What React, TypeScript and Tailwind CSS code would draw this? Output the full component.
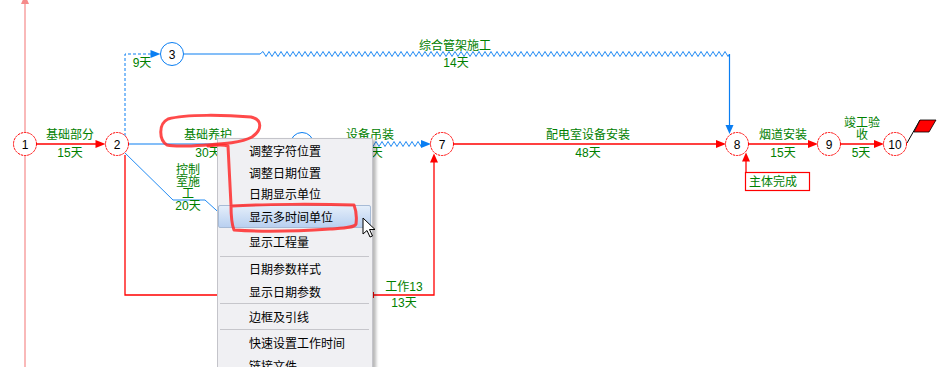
const RED = '#ff0000'
const BLUE = '#0a7ef2'
const GREEN = '#008000'

type Node = { id: string; x: number; y: number; color: string }

const nodes: Node[] = [
  { id: '1', x: 25, y: 144, color: RED },
  { id: '2', x: 117, y: 144, color: RED },
  { id: '3', x: 172, y: 54, color: BLUE },
  { id: '', x: 302, y: 144, color: BLUE },
  { id: '7', x: 442, y: 144, color: RED },
  { id: '8', x: 737, y: 144, color: RED },
  { id: '9', x: 829, y: 144, color: RED },
  { id: '10', x: 895, y: 144, color: RED },
]

const labels: { t: string; x: number; y: number }[] = [
  { t: '基础部分', x: 70, y: 135 },
  { t: '15天', x: 70, y: 153 },
  { t: '9天', x: 142, y: 63 },
  { t: '综合管架施工', x: 455, y: 46 },
  { t: '14天', x: 456, y: 63 },
  { t: '基础养护', x: 208, y: 135 },
  { t: '30天', x: 208, y: 153 },
  { t: '控制', x: 188, y: 170 },
  { t: '室施', x: 188, y: 182 },
  { t: '工', x: 188, y: 194 },
  { t: '20天', x: 188, y: 206 },
  { t: '设备吊装', x: 370, y: 135 },
  { t: '20天', x: 370, y: 153 },
  { t: '配电室设备安装', x: 588, y: 135 },
  { t: '48天', x: 588, y: 153 },
  { t: '烟道安装', x: 783, y: 135 },
  { t: '15天', x: 783, y: 153 },
  { t: '竣工验', x: 862, y: 123 },
  { t: '收', x: 862, y: 135 },
  { t: '5天', x: 861, y: 153 },
  { t: '工作13', x: 404, y: 287 },
  { t: '13天', x: 404, y: 303 },
]

function zigzag(x1: number, x2: number, y: number) {
  let d = `M${x1},${y}`
  let up = true
  for (let x = x1 + 3; x <= x2; x += 3) {
    d += ` L${x},${up ? y - 2.5 : y + 2.5}`
    up = !up
  }
  return d + ` L${x2},${y}`
}

const right = (x: number, y: number) => `${x},${y} ${x - 10},${y - 4} ${x - 10},${y + 4}`
const upArrow = (x: number, y: number) => `${x},${y} ${x - 4},${y + 9} ${x + 4},${y + 9}`
const down = (x: number, y: number) => `${x},${y} ${x - 4},${y - 9} ${x + 4},${y - 9}`

function Diagram() {
  return (
    <svg
      width={950}
      height={367}
      className="absolute inset-0 font-['Liberation_Sans','Noto_Sans_CJK_SC',sans-serif] text-[12px]"
    >
      {/* timeline on the left */}
      <line x1={25} y1={0} x2={25} y2={367} stroke="#f58a8a" strokeWidth={1.2} />
      <polygon points={upArrow(25, -5)} fill="#f58a8a" />

      {/* 1 -> 2 */}
      <line x1={36} y1={144} x2={100} y2={144} stroke={RED} strokeWidth={1.5} />
      <polygon points={right(105.5, 144)} fill={RED} />

      {/* 2 -> 3 dashed */}
      <polyline points="125,136 125,54 152,54" fill="none" stroke={BLUE} strokeDasharray="3 2" />
      <polygon points={right(160.5, 54)} fill={BLUE} />

      {/* 3 -> 8 */}
      <line x1={183.5} y1={54} x2={260} y2={54} stroke={BLUE} strokeWidth={1.2} />
      <path d={zigzag(260, 729.5, 54)} fill="none" stroke={BLUE} strokeWidth={0.9} />
      <line x1={729.5} y1={54} x2={729.5} y2={126} stroke={BLUE} strokeWidth={1.2} />
      <polygon points={down(729.5, 134)} fill={BLUE} />

      {/* 2 -> hidden node */}
      <line x1={128.5} y1={144} x2={291} y2={144} stroke={BLUE} strokeWidth={1.2} />
      <polyline points="124,152 173,200 205,200 226,219" fill="none" stroke={BLUE} strokeWidth={0.9} />

      {/* hidden node -> 7 */}
      <path d={zigzag(313, 421, 144)} fill="none" stroke={BLUE} strokeWidth={0.9} />
      <polygon points={right(431, 144)} fill={BLUE} />

      {/* 2 -> 7 lower path */}
      <polyline points="125,155 125,295 434,295 434,162" fill="none" stroke={RED} strokeWidth={1.3} />
      <line x1={373.5} y1={292} x2={373.5} y2={298} stroke={RED} />
      <polygon points={upArrow(434, 153.5)} fill={RED} />

      {/* 7 -> 8 -> 9 -> 10 */}
      <line x1={453.5} y1={144} x2={720} y2={144} stroke={RED} strokeWidth={1.5} />
      <polygon points={right(726, 144)} fill={RED} />
      <line x1={748.5} y1={144} x2={812} y2={144} stroke={RED} strokeWidth={1.5} />
      <polygon points={right(818, 144)} fill={RED} />
      <line x1={840.5} y1={144} x2={878} y2={144} stroke={RED} strokeWidth={1.5} />
      <polygon points={right(884, 144)} fill={RED} />

      {/* milestone box */}
      <line x1={746} y1={172} x2={746} y2={160} stroke={RED} strokeWidth={1.3} />
      <polygon points={upArrow(746, 152.5)} fill={RED} />
      <rect x={745.5} y={172.5} width={64} height={18} fill="white" stroke={RED} strokeWidth={1.2} />
      <text x={749} y={182} fill={GREEN} dominantBaseline="central">主体完成</text>

      {/* flag */}
      <line x1={907} y1={143} x2={920} y2={120} stroke="black" />
      <polygon points="920,120 936,120 929,132 914,132" fill={RED} stroke="black" strokeWidth={0.8} />

      {nodes.map((n, i) => (
        <g key={i}>
          <circle
            cx={n.x}
            cy={n.y}
            r={11.5}
            fill="white"
            stroke={n.color}
            strokeWidth={1}
            strokeDasharray={n.color === RED ? '2.5 0.8' : undefined}
          />
          <text x={n.x} y={n.y + 0.5} textAnchor="middle" dominantBaseline="central" fill="black">
            {n.id}
          </text>
        </g>
      ))}

      {labels.map((l, i) => (
        <text key={i} x={l.x} y={l.y} textAnchor="middle" dominantBaseline="central" fill={GREEN}>
          {l.t}
        </text>
      ))}
    </svg>
  )
}

type Row = { label?: string; h: number; active?: boolean; sep?: boolean }

const rows: Row[] = [
  { label: '调整字符位置', h: 22 },
  { label: '调整日期位置', h: 21 },
  { label: '日期显示单位', h: 22 },
  { label: '显示多时间单位', h: 23, active: true },
  { label: '显示工程量', h: 28 },
  { sep: true, h: 1 },
  { label: '日期参数样式', h: 23 },
  { label: '显示日期参数', h: 23 },
  { sep: true, h: 1 },
  { label: '边框及引线', h: 25 },
  { sep: true, h: 1 },
  { label: '快速设置工作时间', h: 25 },
  { label: '链接文件', h: 22 },
]

function ContextMenu() {
  return (
    <div className="absolute left-[217px] top-[138px] w-[156px] h-[240px] bg-[#f0f0f3] border border-[#c4c4ca] shadow-[3px_2px_3px_rgba(0,0,0,0.28)] pt-px font-['Noto_Sans_CJK_SC',sans-serif] text-[12px] text-black">
      {rows.map((r, i) =>
        r.sep ? (
          <div key={i} className="h-px ml-[2px] mr-[3px] bg-[#c6c6cb]" />
        ) : (
          <div
            key={i}
            style={{ height: r.h }}
            className={
              r.active
                ? 'flex items-center pl-[30px] mr-px rounded-[2px] border border-[#a7bbd6] bg-gradient-to-b from-[#e4eefa] to-[#b9d0f0]'
                : 'flex items-center pl-[31px]'
            }
          >
            {r.label}
          </div>
        )
      )}
    </div>
  )
}

function Annotation() {
  return (
    <svg width={950} height={367} className="absolute inset-0 pointer-events-none">
      <g fill="none" stroke="#ff2a2a" strokeOpacity={0.85} strokeWidth={3} strokeLinecap="round" strokeLinejoin="round">
        <path d="M167,145 C159,140 158,124 168,119 C186,114 226,115 251,117 C263,120 262,130 252,137 C241,143 222,144 206,145 C190,146 176,147 167,145" />
        <path d="M208,146 C215,145 222,144 228,146 C229,165 230,185 231,205 C231,216 232,225 234,230 C262,232 300,231 330,229 C345,228 354,228 356,224 C357,216 356,210 354,205 C320,204 262,204 232,206" />
      </g>
      <path
        d="M363,218 L363,234 L367,230.5 L370,237 L372.5,236 L369.5,229.5 L375,229.5 Z"
        fill="white"
        stroke="black"
        strokeWidth={1}
        strokeLinejoin="miter"
      />
    </svg>
  )
}

export default function App() {
  return (
    <div className="relative w-[950px] h-[367px] overflow-hidden bg-white">
      <Diagram />
      <ContextMenu />
      <Annotation />
    </div>
  )
}
